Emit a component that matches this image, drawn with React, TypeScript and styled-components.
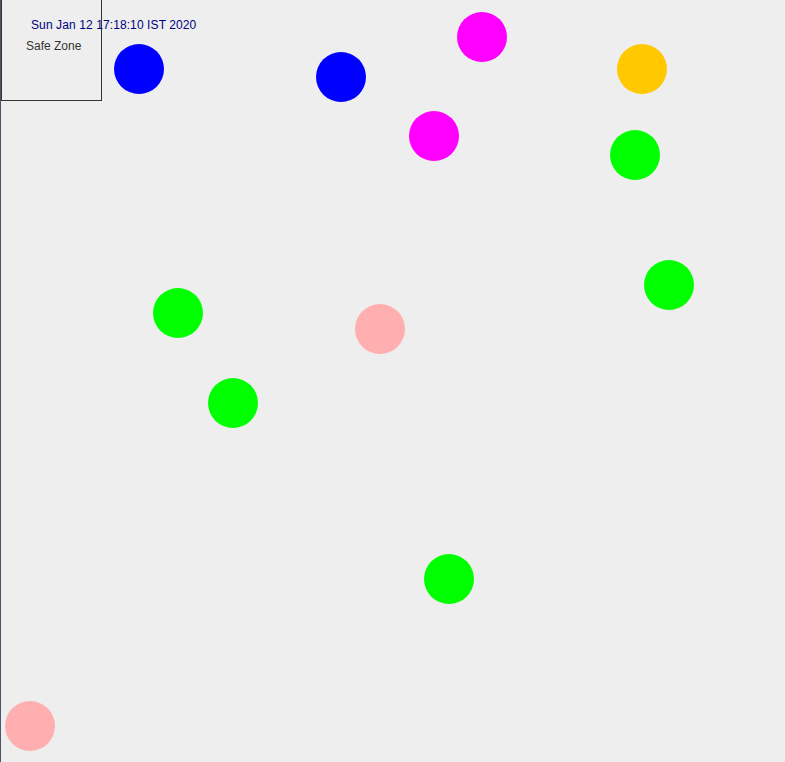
import React from 'react';
import styled, { createGlobalStyle } from 'styled-components';

const GlobalStyle = createGlobalStyle`
  html, body {
    margin: 0;
    padding: 0;
    background: #eeeeee;
  }
`;

type Ball = { x: number; y: number; color: string };

// positions are measured from the left frame edge (inside the 1px border)
const balls: Ball[] = [
  { x: 113, y: 44, color: '#0000ff' },
  { x: 315, y: 52, color: '#0000ff' },
  { x: 456, y: 12, color: '#ff00ff' },
  { x: 408, y: 111, color: '#ff00ff' },
  { x: 616, y: 44, color: '#ffc800' },
  { x: 609, y: 130, color: '#00ff00' },
  { x: 643, y: 260, color: '#00ff00' },
  { x: 152, y: 288, color: '#00ff00' },
  { x: 354, y: 304, color: '#ffafaf' },
  { x: 207, y: 378, color: '#00ff00' },
  { x: 423, y: 554, color: '#00ff00' },
  { x: 4, y: 701, color: '#ffafaf' },
];

const App = () => {
  return (
    <>
      <GlobalStyle />
      <Canvas>
        <SafeZone>
          <ZoneLabel>Safe Zone</ZoneLabel>
        </SafeZone>
        <Clock>Sun Jan 12 17:18:10 IST 2020</Clock>
        {balls.map((b, i) => (
          <Dot key={i} $color={b.color} style={{ left: b.x, top: b.y }} />
        ))}
      </Canvas>
    </>
  );
};

export default App;

const Canvas = styled.div`
  position: relative;
  width: 785px;
  height: 762px;
  overflow: hidden;
  background: #eeeeee;
  border-left: 1px solid #4c5466;
  box-sizing: border-box;
  font-family: 'Liberation Sans', Arial, sans-serif;
`;

const SafeZone = styled.div`
  position: absolute;
  left: 0;
  top: -1px;
  width: 101px;
  height: 102px;
  border: 1px solid #333333;
  box-sizing: border-box;
  padding: 36px 0 0 24px;
`;

const ZoneLabel = styled.span`
  font-size: 12px;
  color: #333333;
`;

const Clock = styled.div`
  position: absolute;
  left: 30px;
  top: 18px;
  font-size: 12px;
  letter-spacing: 0.1px;
  color: #000080;
  white-space: nowrap;
`;

const Dot = styled.div<{ $color: string }>`
  position: absolute;
  width: 50px;
  height: 50px;
  border-radius: 50%;
  background: ${({ $color }) => $color};
`;
